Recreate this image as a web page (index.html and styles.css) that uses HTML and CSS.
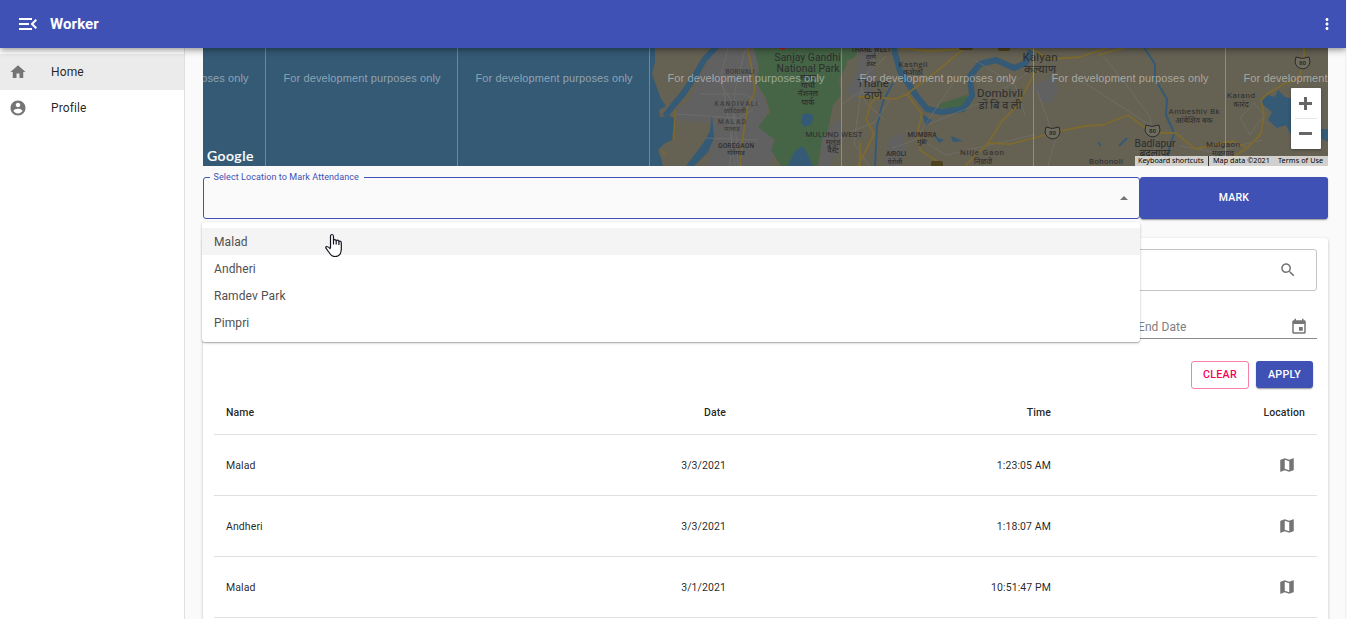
FILE: index.html
```
<!DOCTYPE html>
<html lang="en">
<head>
<meta charset="utf-8">
<title>Worker</title>
<link rel="stylesheet" href="styles.css">
</head>
<body>
<div class="app">
  <header class="appbar">
    <svg class="menu-icon" viewBox="0 0 24 24"><path d="M3 18h13v-2H3v2zM3 13h10v-2H3v2zm0-7v2h13V6H3zm18 9.59L17.42 12 21 8.41 19.59 7l-5 5 5 5L21 15.59z"/></svg>
    <h1 class="title">Worker</h1>
    <svg class="more-icon" viewBox="0 0 24 24"><path d="M12 8c1.1 0 2-.9 2-2s-.9-2-2-2-2 .9-2 2 .9 2 2 2zm0 2c-1.1 0-2 .9-2 2s.9 2 2 2 2-.9 2-2-.9-2-2-2zm0 6c-1.1 0-2 .9-2 2s.9 2 2 2 2-.9 2-2-.9-2-2-2z"/></svg>
  </header>
  <div class="body">
    <nav class="sidebar">
      <a class="nav-item selected"><svg class="icon" viewBox="0 0 24 24"><path d="M10 20v-6h4v6h5v-8h3L12 3 2 12h3v8z"/></svg><span>Home</span></a>
      <a class="nav-item"><svg class="icon" viewBox="0 0 24 24"><path d="M12 2C6.48 2 2 6.48 2 12s4.48 10 10 10 10-4.48 10-10S17.52 2 12 2zm0 3c1.66 0 3 1.34 3 3s-1.34 3-3 3-3-1.34-3-3 1.34-3 3-3zm0 14.2c-2.5 0-4.71-1.28-6-3.22.03-1.99 4-3.08 6-3.08 1.99 0 5.97 1.09 6 3.08-1.29 1.94-3.5 3.22-6 3.22z"/></svg><span>Profile</span></a>
    </nav>
    <main class="content">
      <section class="map">
        <svg class="map-canvas" viewBox="203 48 1125 118" width="1125" height="118">
          <rect class="sea" x="203" y="48" width="1125" height="118"/>
          <path class="land" d="M655 48L1328 48V166H663L661 158 658 150 664 144 672 140 674 118 670 116 660 117 659 110 666 106 661 99 657 88 652 74 655 62Z"/>
          <path class="urban" d="M712 48H754L759 62 756 80 763 95 768 110 762 125 772 135 775 150 769 166H708L713 140 709 123 676 120 678 108 690 100 697 82 709 60ZM823 133l17-14 3 17-12 30h-11ZM860 48h20l-8 15 6 18-8 12-15 8-8-10 10-20ZM1034 86l20-10 4 14-8 14-10-4ZM888 140l14-8 4 20-8 14h-13Z"/>
          <path class="green" d="M754 48H842L847 64 839 79 841 95 833 105 828 130 822 139 818 166H781L771 150 775 140 758 127 770 112 766 98 756 82 759 68ZM939 104l28-9 4 8-8 5-24 0ZM842 48h18l-6 10-12 5Z"/>
          <path class="water-line w7" d="M717 46L704 60 695 76 683 94 672 107 665 116"/>
          <path class="sea" d="M712 114l2 24-6 14-14 14h-8l18-24 6-11ZM802 115l5-2 6 2-1 9-8 3-3-5ZM788 166l6-14 9-6 5 9 5 11ZM922 114l10 6-6 6ZM934 136l10 4-5 3ZM951 136l12 5-10 1ZM1260 102l8-7 7 2 3-7 7 7 9 2v24l12-6 4 12h18v13l-24-13-13 6-5-10-9 3-9-8 4-8Z"/>
          <path class="water-line w6" d="M893 46L900 71 915 94 927 109 942 112 963 109 972 96 970 76 980 64 996 60 1014 68 1026 63 1032 48"/>
          <path class="water-line w3" d="M893 83l-10 18-6 25-2 40M1143 46l12 18 0 15 12 20-1 16 8 18-10 33M1098 142l3 4M1127 138l-8 8"/>
          <path class="minor" d="M728 48l-7 27 6 35 8 56M700 94h45l15 10M676 114l62 4 15-8M706 138l52 2M718 80l16 25 4 61M745 50l-10 40-5 76M842 104l18-12 30 8-15 22-25 10M886 56l-26 25 6 22 18 16M927 125l60-25 45-30M906 130l40 25 88-20M1037 90l18 50-7 26M1080 80l70 45 20 41M1240 118l14-15 10 12-14 20ZM1180 146l34 6 48-12M975 60l40 25 10 30M955 80l-40 60-23 8M1100 52l28 35 22 30 6 40M880 48l-18 35-8 60 15 23"/>
          <path class="road" d="M747 46l4 18 4 27-8 18-5 35-2 22M967 46L937 71 907 94 896 99 884 98 858 97M907 94l15 20-4 16 2 20 18 12v6M1036 68l-5 12-14 26-15 15-14 22-27 27M988 143l22 1 55-14 20-4 18-1 25-10 24 18 24 0 19 16 38-8 14 7 15-15M1025 46l25 13 30-2 30-10M1098 55l32-9M1304 46v15l-5 17-15 6-17 10-6 6 3 15-3 18-14 15-18 12M900 48l28 3 34-2M880 93l-9 10-5 16 8 15-16 32M860 166v-24"/>
          <path class="coast-road" d="M675 110l-1 30M661 150l5 5"/>
          <g class="shield"><path d="M1046 127q6 3 13 0l1 5q-1 6-7 7-7-1-8-7Z"/><path d="M1146 125q6 3 13 0l1 5q-1 6-7 7-7-1-8-7ZM1296 57q6 3 13 0l1 5q-1 6-7 7-7-1-8-7Z"/></g>
          <g class="badge"><rect x="931" y="161" width="12" height="7" rx="2"/><rect x="959" y="44" width="14" height="6" rx="2"/><rect x="998" y="44" width="12" height="7" rx="2"/></g>
          <circle class="pin" cx="782.500" cy="44" r="5.500"/>
          <g class="labels">
            <g class="lg"><text x="807.500" y="61" textLength="66">Sanjay Gandhi</text><text x="808" y="72" textLength="63">National Park</text></g>
            <g class="sm hi"><text x="808" y="80">संजय</text><text x="808" y="88">गांधी</text><text x="808" y="96">नॅशनल</text><text x="808" y="105">पार्क</text></g>
            <g class="sm"><text class="dim" x="740" y="74" textLength="29">BORIVALI</text><text class="dim" x="736" y="106" textLength="43">KANDIVALI</text><text class="dim" x="735" y="113">कांदिवली</text><text class="dim" x="732" y="124" textLength="28">MALAD</text><text class="dim" x="732" y="131">मालाड</text><text x="736" y="148" textLength="36">GOREGAON</text><text x="736" y="155">गोरेगाव</text></g>
            <g class="md"><text x="834" y="137" textLength="57">MULUND WEST</text><text x="833" y="145">मुलुंड</text><text x="833" y="153">वेस्ट</text></g>
            <g class="sm"><text x="871" y="52" textLength="40">THANE WEST</text><text x="871" y="59">ठाणे</text><text x="871" y="66">वेस्ट</text><text x="922" y="137" textLength="29">MUMBRA</text><text x="922" y="144">मुंब्रा</text><text x="896" y="156" textLength="20">AIROLI</text><text x="895" y="164">ऐरोली</text></g>
            <g class="md"><text x="913" y="67" textLength="29">Kasheli</text><text x="913" y="75">कशेळी</text><text x="982" y="155" textLength="44">Nilje Gaon</text><text x="983" y="164">निळजे</text></g>
            <g class="xl"><text x="873" y="87">Thane</text><text x="873" y="99">ठाणे</text><text x="1000" y="97" textLength="46">Dombivli</text><text x="1000" y="109" textLength="43">डोंबिवली</text><text x="1040" y="61" textLength="35">Kalyan</text><text x="1040" y="73">कल्याण</text></g>
            <g class="md"><text x="1241" y="98" textLength="28">Karand</text><text x="1241" y="107">कारंद</text><text x="1194" y="114" textLength="51">Ambeshiv Bk</text><text x="1194" y="123">आंबेशिव बक</text><text x="1223" y="147" textLength="34">Mulgaon</text><text x="1223" y="156">मुळगाव</text><text x="1106" y="164" textLength="34">Bohonoli</text></g>
            <g class="lg"><text x="1155" y="147" textLength="41">Badlapur</text><text x="1155" y="157">बदलापूर</text></g>
            <g class="num"><text x="1052.500" y="135">80</text><text x="1152.500" y="133">80</text><text x="1302.500" y="65">80</text></g>
          </g>
          <path class="tiles" d="M265.500 48v118M457.500 48v118M649.500 48v118M841.500 48v118M1033.500 48v118M1225.500 48v118"/>
          <g class="watermark">
            <text x="91.500" y="81.500" textLength="157">For development purposes only</text><text x="283.500" y="81.500" textLength="157">For development purposes only</text><text x="475.500" y="81.500" textLength="157">For development purposes only</text><text x="667.500" y="81.500" textLength="157">For development purposes only</text><text x="859.500" y="81.500" textLength="157">For development purposes only</text><text x="1051.500" y="81.500" textLength="157">For development purposes only</text><text x="1243.500" y="81.500" textLength="157">For development purposes only</text>
          </g>
        </svg>
        <span class="google">Google</span>
        <div class="zoom"><i class="plus"></i><i class="minus"></i></div>
        <div class="legal"><span class="keys">Keyboard shortcuts</span><span class="data">Map data ©2021</span><span class="terms">Terms of Use</span></div>
      </section>
      <section class="mark-row">
        <fieldset class="select"><legend>Select Location to Mark Attendance</legend><i class="caret"></i></fieldset>
        <button class="btn mark">MARK</button>
        <ul class="options"><li class="active">Malad</li><li>Andheri</li><li>Ramdev Park</li><li>Pimpri</li></ul>
      </section>
      <section class="card">
        <div class="search"><svg class="icon" viewBox="0 0 24 24"><path d="M15.500 14h-.79l-.28-.27C15.410 12.590 16 11.110 16 9.500 16 5.910 13.090 3 9.500 3S3 5.910 3 9.500 5.910 16 9.500 16c1.610 0 3.090-.59 4.230-1.570l.27.28v.79l5 4.990L20.490 19l-4.990-5zm-6 0C7.010 14 5 11.990 5 9.500S7.010 5 9.500 5 14 7.010 14 9.500 11.990 14 9.500 14z"/></svg></div>
        <div class="dates"><div class="date"></div><div class="date"><span>End Date</span><svg class="icon" viewBox="0 0 24 24"><path d="M17 12h-5v5h5v-5zM16 1v2H8V1H6v2H5c-1.110 0-1.990.9-1.990 2L3 19c0 1.100.89 2 2 2h14c1.100 0 2-.9 2-2V5c0-1.100-.9-2-2-2h-1V1h-2zm3 18H5V8h14v11z"/></svg></div></div>
        <div class="actions"><button class="btn clear">CLEAR</button><button class="btn apply">APPLY</button></div>
        <table class="records">
          <colgroup><col class="c-name"><col class="c-date"><col class="c-time"><col class="c-loc"></colgroup>
          <thead><tr><th>Name</th><th>Date</th><th>Time</th><th>Location</th></tr></thead>
          <tbody>
            <tr><td>Malad</td><td>3/3/2021</td><td>1:23:05 AM</td><td><svg class="icon" viewBox="0 0 24 24"><path d="M20.500 3l-.16.03L15 5.100 9 3 3.360 4.900c-.21.07-.36.25-.36.48V20.500c0 .28.22.5.5.5l.16-.03L9 18.900l6 2.100 5.640-1.900c.21-.07.36-.25.36-.48V3.500c0-.28-.22-.5-.5-.5zM15 19l-6-2.110V5l6 2.110V19z"/></svg></td></tr>
            <tr><td>Andheri</td><td>3/3/2021</td><td>1:18:07 AM</td><td><svg class="icon" viewBox="0 0 24 24"><path d="M20.500 3l-.16.03L15 5.100 9 3 3.360 4.900c-.21.07-.36.25-.36.48V20.500c0 .28.22.5.5.5l.16-.03L9 18.900l6 2.100 5.640-1.900c.21-.07.36-.25.36-.48V3.500c0-.28-.22-.5-.5-.5zM15 19l-6-2.110V5l6 2.110V19z"/></svg></td></tr>
            <tr><td>Malad</td><td>3/1/2021</td><td>10:51:47 PM</td><td><svg class="icon" viewBox="0 0 24 24"><path d="M20.500 3l-.16.03L15 5.100 9 3 3.360 4.900c-.21.07-.36.25-.36.48V20.500c0 .28.22.5.5.5l.16-.03L9 18.900l6 2.100 5.640-1.900c.21-.07.36-.25.36-.48V3.500c0-.28-.22-.5-.5-.5zM15 19l-6-2.110V5l6 2.110V19z"/></svg></td></tr>
          </tbody>
        </table>
      </section>
    </main>
  </div>
  <svg class="cursor" viewBox="0 0 20 26" width="20" height="26"><path d="M5.500 15V3.500q0-2 1.500-2t1.500 2V7q1.400-1 2.500.5 1.700-.9 2.700.6 2.300-.5 2.600 1.900V17q-.6 6.500-6.300 6.500-3.500 0-5.500-3.500L.9 15.200q-.4-1.400.8-1.700 1.600-.1 3.800 2.500M8.500 7v4.500M11.200 7.500v4M13.900 8.500v3.500"/></svg>
</div>
</body>
</html>
```
FILE: styles.css
```
* { box-sizing: border-box; }
body { margin: 0; background: #fafafa; font-family: Roboto, "Noto Sans", sans-serif; color: rgba(0,0,0,.87); overflow: hidden; }
.app { position: relative; width: 1346px; height: 619px; overflow: hidden; }
.appbar { position: relative; z-index: 2; display: flex; align-items: center; height: 48px; padding: 0 7px 0 16px; background: #3f51b5; color: #fff; box-shadow: 0 2px 4px -1px rgba(0,0,0,.2), 0 4px 5px rgba(0,0,0,.14), 0 1px 10px rgba(0,0,0,.12); }
.menu-icon { width: 24px; height: 24px; fill: #fff; }
.more-icon { width: 24px; height: 18px; fill: #fff; }
.title { flex: 1; margin: 0 0 0 10px; font-size: 15px; font-weight: 700; letter-spacing: .1px; }
.body { display: flex; height: 571px; }
.sidebar { flex: none; width: 185px; padding-top: 6px; background: #fff; border-right: 1px solid #e0e0e0; }
.nav-item { display: flex; align-items: center; gap: 24px; height: 36px; padding-left: 9px; font-size: 12px; letter-spacing: .12px; }
.nav-item.selected { background: #ebebeb; }
.icon { display: block; width: 18px; height: 18px; fill: #757575; }
.content { flex: 1; padding: 0 17px 0 18px; min-width: 0; border-right: 1px solid #f0f0f0; }
.map { position: relative; height: 118px; overflow: hidden; }
.map-canvas { display: block; }
.sea { fill: #345a76; }
.land { fill: #656153; }
.urban { fill: #616161; }
.green { fill: #466547; }
.water-line { fill: none; stroke: #345a76; stroke-linejoin: round; }
.w7 { stroke-width: 6; }
.w6 { stroke-width: 6; }
.w3 { stroke-width: 2; }
.minor { fill: none; stroke: #747370; stroke-width: .8; opacity: .8; stroke-linejoin: round; }
.road, .coast-road { fill: none; stroke: #7d6a30; stroke-width: 1.8; stroke-linejoin: round; }
.coast-road { stroke-width: 1.2; }
.shield path { fill: #706d60; stroke: #2b2b2b; stroke-width: 1; }
.badge { fill: #4d431f; }
.pin { fill: #d01515; }
.labels { text-anchor: middle; fill: #2d2d2d; font-family: Roboto, "Noto Sans", sans-serif; }
.xl { font-size: 11.5px; }
.lg { font-size: 10.3px; }
.md { font-size: 8px; }
.sm { font-size: 6.5px; font-weight: 500; }
.hi { font-size: 8px; }
.dim { fill: #3d3d3d; }
.num { font-size: 6px; font-weight: 700; }
.tiles { stroke: #fff; stroke-opacity: .28; }
.watermark { fill: #fff; fill-opacity: .45; font: 11px "Liberation Sans", Arial, sans-serif; }
.google { position: absolute; left: 4px; bottom: 2px; color: #fff; font: 500 14px/16px Lato, sans-serif; letter-spacing: .45px; -webkit-text-stroke: .2px #fff; }
.zoom { position: absolute; right: 7px; top: 40px; width: 30px; height: 61px; border-radius: 1px; display: grid; grid-template-rows: 30px 30px; row-gap: 1px; box-shadow: 0 1px 3px rgba(0,0,0,.3); background: #fff linear-gradient(#e6e6e6,#e6e6e6) 4px 30px/22px 1px no-repeat; }
.plus { background: linear-gradient(#666,#666) 8px 14px/13px 3px no-repeat, linear-gradient(#666,#666) 13px 9px/3px 13px no-repeat; }
.minus { background: linear-gradient(#666,#666) 8px 13px/13px 3px no-repeat; }
.legal { position: absolute; right: 0; bottom: 0; display: flex; width: 193px; height: 10px; font: 7.2px/9px "Noto Sans", sans-serif; color: #000; background: rgba(245,245,245,.75); white-space: nowrap; }
.keys { width: 74px; padding-left: 3px; border-right: 1px solid #333; }
.data { width: 65px; padding-left: 4px; letter-spacing: .05px; }
.terms { padding-left: 4px; letter-spacing: .1px; }
.mark-row { position: relative; display: flex; height: 42px; margin-top: 11px; }
.select { position: relative; width: 937px; height: 46px; margin: -4px 0 0; padding: 0 0 0 6px; border: 1px solid #3f51b5; border-radius: 3px; min-width: 0; }
.select legend { height: 9px; padding: 0 5px 0 3.500px; color: #3f51b5; font-size: 9px; line-height: 9px; letter-spacing: .08px; }
.caret { position: absolute; right: 11px; top: 14px; border: 4px solid transparent; border-top: 0; border-bottom-color: #757575; }
.btn { border: 0; border-radius: 3px; padding: 0; font: 500 10.5px/14px Roboto, sans-serif; letter-spacing: .25px; color: #fff; background: #3f51b5; box-shadow: 0 2px 1px -1px rgba(0,0,0,.2), 0 1px 2px rgba(0,0,0,.25); }
.mark { flex: 1; height: 42px; padding-bottom: 1px; }
.options { position: absolute; z-index: 1; left: -1px; top: 45px; width: 938px; height: 120px; margin: 0; padding: 6px 0; list-style: none; background: #fff; border-radius: 3px; box-shadow: 0 1px 1px rgba(0,0,0,.2), 0 1px 3px rgba(0,0,0,.2); font-size: 12px; line-height: 27px; letter-spacing: .1px; color: #505050; }
.options li { height: 27px; padding: 1px 0 0 12px; }
.options .active { background: #f4f4f4; }
.card { height: 400px; margin-top: 19px; padding: 11px; background: #fff; border-radius: 3px; box-shadow: 0 1px 3px rgba(0,0,0,.25); }
.search { display: flex; justify-content: flex-end; align-items: center; height: 42px; padding-right: 19px; border: 1px solid #c4c4c4; border-radius: 3px; }
.dates { display: grid; grid-template-columns: 907px 196px; margin-top: 24px; height: 24px; }
.date { display: flex; justify-content: space-between; align-items: center; padding: 0 9px 0 17px; border-bottom: 1px solid #8b8b8b; color: #808080; font-size: 12px; letter-spacing: .08px; }
.actions { display: flex; justify-content: flex-end; gap: 7px; margin: 22px 4px 0 0; }
.clear { width: 58px; height: 28px; border: 1px solid #f77fa8; color: #f50057; background: #fff; box-shadow: none; font-size: 10.7px; }
.apply { width: 57px; height: 27px; font-size: 10.7px; }
.records { width: 1103px; border-collapse: separate; border-spacing: 0; table-layout: fixed; font-size: 10.5px; letter-spacing: .1px; }
.c-name { width: 245px; }
.c-date { width: 279px; }
.c-time { width: 325px; }
.c-loc { width: 254px; }
.records th, .records td { padding: 0 12px; text-align: right; border-bottom: 1px solid #e0e0e0; }
.records th { height: 46px; padding-top: 2px; font-weight: 500; }
.records td { height: 61px; }
.records th:first-child, .records td:first-child { text-align: left; }
.records .icon { width: 18px; height: 18px; margin: 0 9px 0 auto; }
.cursor { position: absolute; z-index: 3; left: 325px; top: 233px; }
.cursor path { fill: #fff; stroke: #151520; stroke-width: 1.2; stroke-linejoin: round; }
```
